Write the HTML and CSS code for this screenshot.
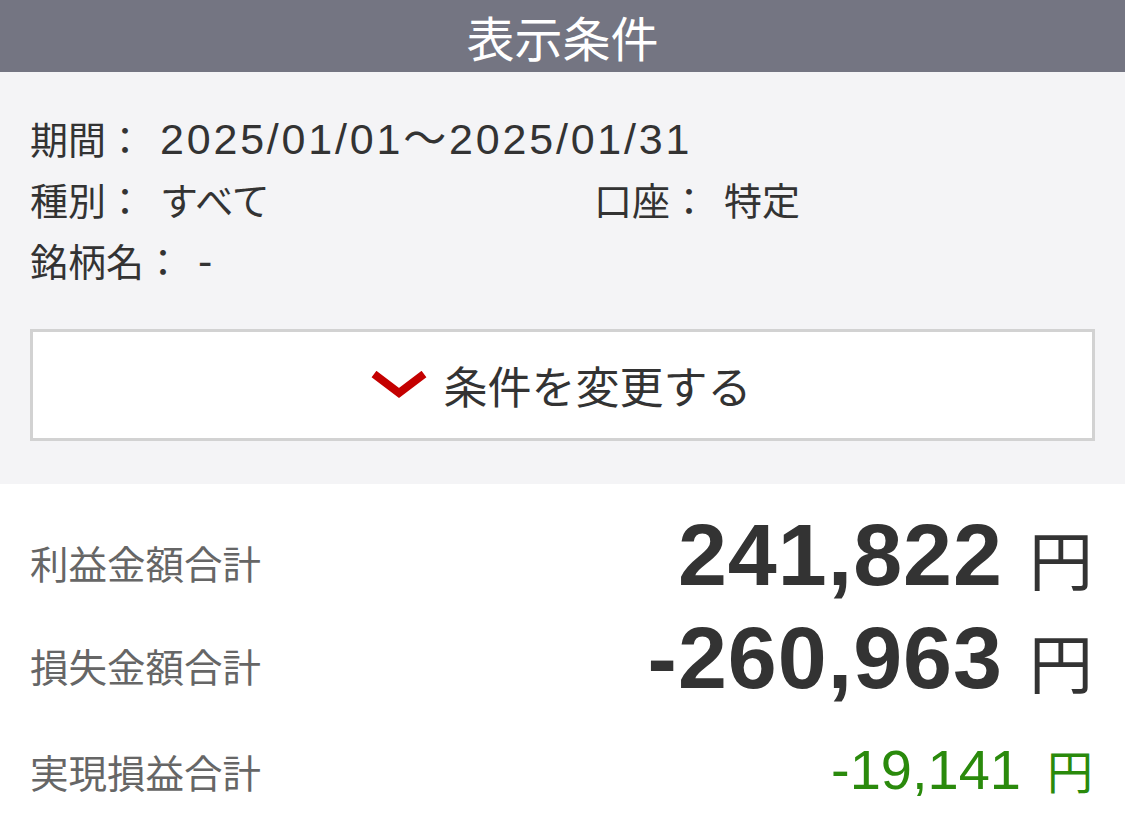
FILE: index.html
```html
<!DOCTYPE html>
<html lang="ja">
<head>
    <meta charset="UTF-8">
    <meta name="viewport" content="width=device-width, initial-scale=1.0">
    <title>表示条件</title>
    <link rel="stylesheet" href="styles.css">
</head>

<body>
    <header class="title-bar">表示条件</header>

    <section class="conditions">
        <div class="cond-row">
            <span class="cond-label">期間：</span>
            <span class="cond-value num">2025/01/01〜2025/01/31</span>
        </div>
        <div class="cond-row">
            <div class="cond-half">
                <span class="cond-label">種別：</span>
                <span class="cond-value">すべて</span>
            </div>
            <div class="cond-half">
                <span class="cond-label">口座：</span>
                <span class="cond-value">特定</span>
            </div>
        </div>
        <div class="cond-row">
            <span class="cond-label">銘柄名：</span>
            <span class="cond-value num">-</span>
        </div>

        <button type="button" class="change-btn">
            <svg class="chevron" width="56" height="28" viewBox="0 0 56 28">
                <polyline points="3,3 28,22 53,3" fill="none" stroke="#c40000" stroke-width="8"/>
            </svg>
            <span>条件を変更する</span>
        </button>
    </section>

    <section class="summary">
        <div class="sum-row">
            <span class="sum-label">利益金額合計</span>
            <span class="sum-value big">241,822<span class="yen">円</span></span>
        </div>
        <div class="sum-row">
            <span class="sum-label">損失金額合計</span>
            <span class="sum-value big">-260,963<span class="yen">円</span></span>
        </div>
        <div class="sum-row total">
            <span class="sum-label">実現損益合計</span>
            <span class="sum-value small green">-19,141<span class="yen">円</span></span>
        </div>
    </section>
</body>
</html>
```

FILE: styles.css
```css
* {
    box-sizing: border-box;
    margin: 0;
    padding: 0;
}

body {
    font-family: "Liberation Sans", "Noto Sans CJK JP", sans-serif;
    background-color: #fff;
    color: #333;
    width: 1125px;
}

.title-bar {
    height: 72px;
    background-color: #747582;
    color: #fff;
    font-family: "Noto Sans CJK JP", sans-serif;
    font-size: 48px;
    line-height: 72px;
    text-align: center;
}

.conditions {
    background-color: #f4f4f6;
    padding: 35px 30px 43px;
}

.cond-row {
    display: flex;
    align-items: baseline;
    height: 61px;
    line-height: 61px;
    font-family: "Noto Sans CJK JP", sans-serif;
    font-size: 38px;
    white-space: nowrap;
}

.cond-half {
    display: flex;
    align-items: baseline;
    flex: 0 0 564px;
}

.cond-label {
    margin-right: 16px;
}

.cond-value.num {
    font-family: "Liberation Sans", "Noto Sans CJK JP", sans-serif;
    font-size: 43px;
    letter-spacing: 2.8px;
}

.change-btn {
    margin-top: 39px;
    width: 100%;
    height: 112px;
    background-color: #fff;
    border: 3px solid #d2d2d2;
    display: flex;
    align-items: center;
    justify-content: center;
    gap: 17px;
    font-family: "Noto Sans CJK JP", sans-serif;
    font-size: 44px;
    color: #333;
}

.chevron {
    margin-left: -3px;
}

.summary {
    padding: 19px 32px 0 30px;
}

.sum-row {
    display: flex;
    justify-content: space-between;
    align-items: center;
    height: 103px;
}

.sum-row.total {
    margin-top: 9px;
}

.sum-label {
    font-family: "Noto Sans CJK JP", sans-serif;
    font-size: 38.5px;
    line-height: 1;
    color: #666;
    margin-top: 15px;
}

.total .sum-label {
    margin-top: 4px;
}

.sum-value {
    font-family: "Liberation Sans", sans-serif;
    line-height: 1;
    white-space: nowrap;
}

.sum-value.big {
    font-size: 88px;
    font-weight: bold;
    letter-spacing: 1px;
}

.sum-value.small {
    font-size: 56px;
}

.green {
    color: #2a8a0c;
}

.yen {
    font-family: "Noto Sans CJK JP", sans-serif;
    font-weight: normal;
    margin-left: 26px;
    letter-spacing: 0;
}

.big .yen {
    font-size: 64px;
}

.small .yen {
    font-size: 46px;
}
```
